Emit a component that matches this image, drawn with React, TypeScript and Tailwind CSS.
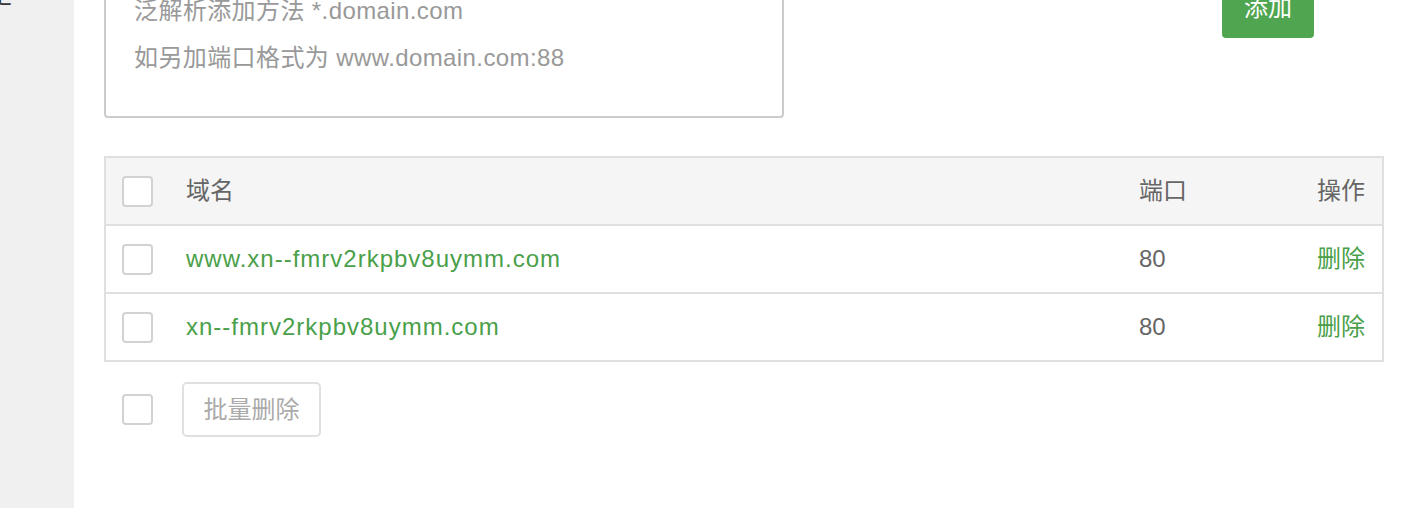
import React from "react";

const font = { fontFamily: '"Liberation Sans", "Noto Sans CJK SC", sans-serif' };

function Box() {
  return <div className="w-[31px] h-[31px] shrink-0 rounded-[4px] border-2 border-[#d2d2d2] bg-white" />;
}

function Row({ domain, header }: { domain: string; header?: boolean }) {
  return (
    <div
      className={
        "flex items-center pl-[16px] pr-[17px] text-[24px] " +
        (header ? "h-[66px] bg-[#f5f5f5] text-[#666]" : "h-[68px] border-t-2 border-[#e0e0e0]")
      }
    >
      <Box />
      <div className={"ml-[33px] flex-1 " + (header ? "text-[#666]" : "text-[#4aa04a] tracking-[1px]")}>
        {domain}
      </div>
      <div className="w-[178px] text-[#666]">{header ? "端口" : "80"}</div>
      <div className={"w-[48px] text-right " + (header ? "text-[#666]" : "text-[#4aa04a]")}>
        {header ? "操作" : "删除"}
      </div>
    </div>
  );
}

export default function App() {
  return (
    <div className="flex h-[508px] w-[1404px] overflow-hidden bg-white" style={font}>
      <div className="w-[74px] shrink-0 bg-[#f0f0f0] overflow-hidden">
        <div className="-mt-[17px] -ml-[12px] text-[24px] leading-[24px] text-[#333]">定</div>
      </div>
      <div className="flex-1 pl-[30px]">
        <div className="flex items-start -mt-[81px]">
          <div className="w-[680px] h-[199px] shrink-0 rounded-[4px] border-2 border-[#cccccc] pl-[28px] pt-[19px] text-[24px] leading-[47px] text-[#999] tracking-[0.4px]">
            <div>每行填写一个域名，默认为80端口</div>
            <div>泛解析添加方法 *.domain.com</div>
            <div>如另加端口格式为 www.domain.com:88</div>
          </div>
          <button className="ml-[438px] mt-[59px] w-[92px] h-[60px] rounded-[4px] bg-[#50a650] text-white text-[24px]">
            添加
          </button>
        </div>
        <div className="mt-[38px] w-[1280px] border-2 border-[#e0e0e0]">
          <Row domain="域名" header />
          <Row domain="www.xn--fmrv2rkpbv8uymm.com" />
          <Row domain="xn--fmrv2rkpbv8uymm.com" />
        </div>
        <div className="flex items-center mt-[20px] pl-[18px]">
          <Box />
          <button className="ml-[29px] w-[139px] h-[55px] rounded-[5px] border-2 border-[#e0e0e0] text-[24px] text-[#aaa]">
            批量删除
          </button>
        </div>
      </div>
    </div>
  );
}
